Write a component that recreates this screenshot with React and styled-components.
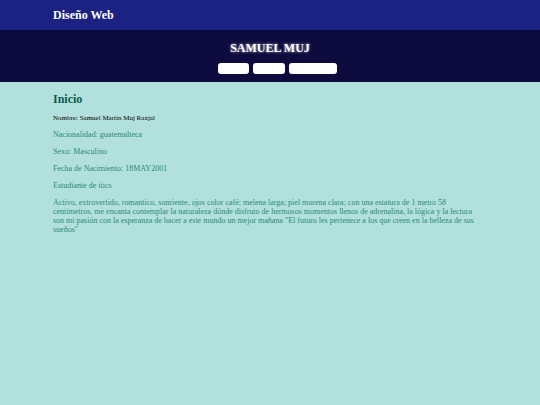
import React from 'react'
import styled, { createGlobalStyle } from 'styled-components'

const GlobalStyle = createGlobalStyle`
    html, body {
        margin: 0;
        padding: 0;
        background: #b2e0dc;
        font-family: "Liberation Serif", "Times New Roman", serif;
    }
`

const links = [
    { id: 'inicio', width: 31 },
    { id: 'estudios', width: 32 },
    { id: 'contacto', width: 48 },
]

const App = () => {
    return (
        <>
            <GlobalStyle />
            <TopBar>
                <span>Diseño Web</span>
            </TopBar>
            <Banner>
                <h1>SAMUEL MUJ</h1>
                <Nav>
                    {links.map(link => <NavButton key={link.id} $w={link.width} />)}
                </Nav>
            </Banner>
            <Content>
                <h2>Inicio</h2>
                <Name>Nombre: Samuel Martín Muj Raxjal</Name>
                <Info>Nacionalidad: guatemalteca</Info>
                <Info>Sexo: Masculino</Info>
                <Info>Fecha de Nacimiento: 18MAY2001</Info>
                <Info>Estudiante de itics</Info>
                <Info>
                    Activo, extrovertido, romantico, sonriente, ojos color café; melena larga; piel morena clara; con una estatura de 1 metro 58 centimetros, me encanta contemplar la naturaleza dónde disfruto de hermosos momentos llenos de adrenalina, la lógica y la lectura son mi pasión con la esperanza de hacer a este mundo un mejor mañana "El futuro les pertenece a los que creen en la belleza de sus sueños"
                </Info>
            </Content>
        </>
    )
}

export default App

const TopBar = styled.header`
    height: 30px;
    background: #1c2282;
    display: flex;
    align-items: center;
    padding: 0 53px;
    &>span{
        color: #ffffff;
        font-weight: bold;
        font-size: 12px;
    }
`

const Banner = styled.div`
    height: 52px;
    box-sizing: border-box;
    background: #0d0a3e;
    padding-top: 11px;
    display: flex;
    flex-direction: column;
    align-items: center;
    &>h1{
        margin: 0;
        font-size: 12px;
        line-height: 14px;
        color: #ffffff;
        text-shadow: 0 0 3px rgba(255,255,255,0.8);
    }
`

const Nav = styled.nav`
    display: flex;
    gap: 4px;
    margin-top: 8px;
    padding-left: 14px;
`

const NavButton = styled.button`
    width: ${p => p.$w}px;
    height: 11px;
    border: 0;
    border-radius: 3px;
    background: #ffffff;
    padding: 0;
`

const Content = styled.main`
    padding: 0 58px 0 53px;
    &>h2{
        margin: 10px 0 8px;
        font-size: 12px;
        line-height: 14px;
        color: #0e5c4d;
    }
`

const Name = styled.p`
    margin: 8px 0;
    font-size: 7px;
    line-height: 8px;
    color: #000000;
`

const Info = styled.p`
    margin: 8px 0;
    font-size: 8px;
    line-height: 9px;
    color: #2a8a79;
`
